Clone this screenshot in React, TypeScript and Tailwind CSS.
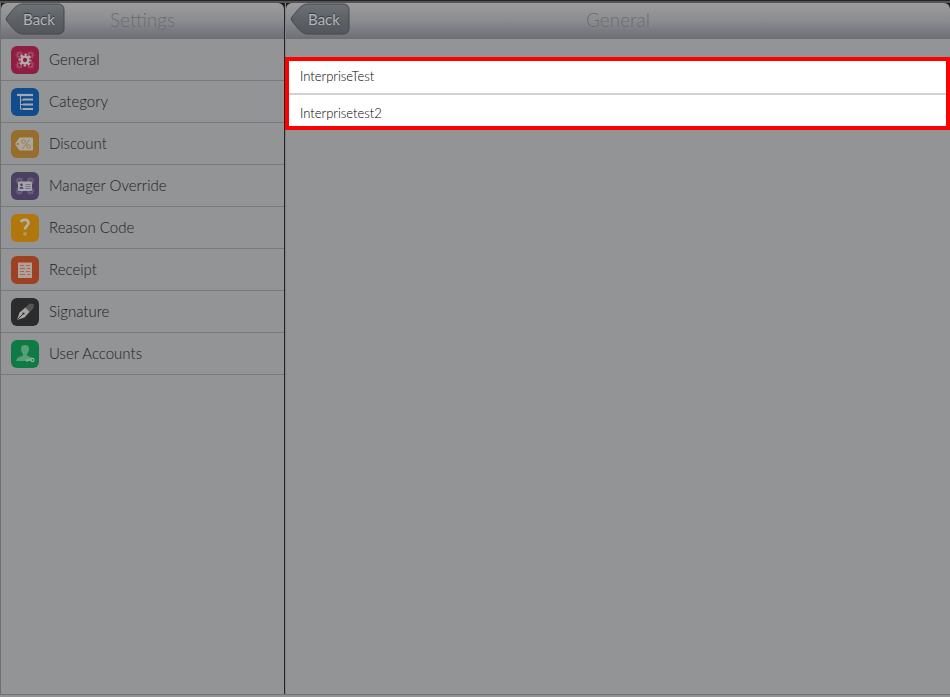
import { ReactNode } from "react";

interface GearProps {
  cx: number;
  cy: number;
  r: number;
  color: string;
  hole: string;
}

function Gear({ cx, cy, r, color, hole }: GearProps) {
  const tooth = (Math.PI * 2 * r) / 16;
  return (
    <g>
      <circle cx={cx} cy={cy} r={r * 0.85} fill={color} />
      <circle cx={cx} cy={cy} r={r} fill="none" stroke={color} strokeWidth={r * 0.4} strokeDasharray={`${tooth} ${tooth}`} strokeDashoffset={tooth / 2} />
      <circle cx={cx} cy={cy} r={r * 0.4} fill={hole} />
    </g>
  );
}

function SmallGears({ color, hole }: { color: string; hole: string }) {
  return (
    <>
      <Gear cx={8.5} cy={9} r={3.2} color={color} hole={hole} />
      <Gear cx={19.5} cy={9} r={3.2} color={color} hole={hole} />
      <Gear cx={8.5} cy={19} r={3.2} color={color} hole={hole} />
      <Gear cx={19.5} cy={19} r={3.2} color={color} hole={hole} />
    </>
  );
}

interface Item {
  label: string;
  bg: string;
  icon: ReactNode;
}

const items: Item[] = [
  {
    label: "General",
    bg: "bg-[#8e1f43]",
    icon: (
      <>
        <SmallGears color="#a94a68" hole="#8e1f43" />
        <Gear cx={14} cy={14} r={5.4} color="#b3adaf" hole="#8e1f43" />
      </>
    ),
  },
  {
    label: "Category",
    bg: "bg-[#124c8e]",
    icon: (
      <g stroke="#a3a9af" fill="none">
        <path d="M6 7h16" strokeWidth="2.2" />
        <path d="M9.5 8v13.5M9.5 12h3M9.5 16.5h3M9.5 21h3" strokeWidth="1" />
        <path d="M12 11.500h10M12 16.500h10M12 21h10" strokeWidth="2.2" />
      </g>
    ),
  },
  {
    label: "Discount",
    bg: "bg-[#966d2c]",
    icon: (
      <>
        <path d="M4 14l4.5-6.500H21a1 1 0 0 1 1 1v11a1 1 0 0 1-1 1H8.500z" fill="#aaa69e" />
        <circle cx="6.800" cy="14" r="1.100" fill="#966d2c" />
        <g stroke="#9b7c4a" fill="none" strokeWidth="1">
          <circle cx="12.500" cy="11.500" r="1.800" />
          <circle cx="17.500" cy="16.500" r="1.800" />
          <path d="M18.500 9.500l-7 9.500" />
        </g>
      </>
    ),
  },
  {
    label: "Manager Override",
    bg: "bg-[#4b4061]",
    icon: (
      <>
        <SmallGears color="#6c6480" hole="#4b4061" />
        <rect x="7" y="9.500" width="14" height="9.500" rx="1" fill="#a5a4aa" />
        <circle cx="10.500" cy="12.800" r="1.300" fill="#4b4061" />
        <path d="M8.500 16.800c0-2.800 4-2.800 4 0z" fill="#4b4061" />
        <path d="M14.500 12.500h5M14.500 14.500h5M14.500 16.500h5" stroke="#77728a" strokeWidth="1" />
      </>
    ),
  },
  {
    label: "Reason Code",
    bg: "bg-[#b0770c]",
    icon: (
      <>
        <path d="M10 8.200c1-3.200 7.800-3 7.500.8-.2 2.800-3.500 2.800-3.500 6.500" stroke="#b4b0a8" strokeWidth="2.800" fill="none" />
        <circle cx="14" cy="19.800" r="1.900" fill="#b09a68" />
      </>
    ),
  },
  {
    label: "Receipt",
    bg: "bg-[#9c4122]",
    icon: (
      <>
        <rect x="7" y="6.500" width="14" height="15.500" fill="#b0a09a" />
        <path d="M9 9.500h4M15 9.500h4M9 12.500h5M16 12.500h3M9 15.500h4M15 15.500h4M9 18.500h5M16 18.500h3" stroke="#a6684f" strokeWidth="1" />
      </>
    ),
  },
  {
    label: "Signature",
    bg: "bg-[#2b2b2b]",
    icon: (
      <>
        <path d="M14.500 9.500l4-4 4.500.5-.5 4-4 4.500z" fill="#555555" />
        <path d="M6 22l2.500-7.500 6-5 4 4.500-5 5.500z" fill="#a5a5a5" />
        <path d="M6.500 21.500l5.500-5.500" stroke="#2b2b2b" strokeWidth=".9" />
        <circle cx="12.500" cy="15.500" r="1.100" fill="#2b2b2b" />
      </>
    ),
  },
  {
    label: "User Accounts",
    bg: "bg-[#0f7a43]",
    icon: (
      <>
        <path d="M14 5c-3 0-4.300 2-4 4.600.2 2.200 1 3.400 2 4.400v1.500c-2 1.300-6.500 1.500-6.800 5.500h17.300c-.3-4-4.500-4.200-6.500-5.500V14c1-1 1.800-2.200 2-4.400.3-2.600-1-4.600-4-4.600z" fill="#55a077" />
        <path d="M15 20h5M16 20v1.800" stroke="#a0b5a8" strokeWidth="1.200" />
        <circle cx="21.500" cy="20" r="1.600" fill="#0f7a43" stroke="#a0b5a8" strokeWidth="1.100" />
      </>
    ),
  },
];

const accounts = ["InterpriseTest", "Interprisetest2"];

function BackButton() {
  return (
    <button type="button" className="relative h-8 w-15 pl-2 text-[15px] font-normal text-[#b4b7bb] [text-shadow:0_-1px_1px_#303338]">
      <svg className="absolute inset-0 h-full w-full" viewBox="0 0 60 32" aria-hidden="true">
        <defs>
          <linearGradient id="back" x1="0" y1="0" x2="0" y2="1">
            <stop offset="0" stopColor="#6e7175" />
            <stop offset="0.5" stopColor="#5e6267" />
            <stop offset="1" stopColor="#53575d" />
          </linearGradient>
        </defs>
        <path d="M18 1H53Q59 1 59 7V25Q59 31 53 31H18C11 31 7 24 2 18Q0 16 2 14C7 8 11 1 18 1Z" fill="url(#back)" stroke="#44474b" />
      </svg>
      <span className="relative">Back</span>
    </button>
  );
}

function Header({ title }: { title: string }) {
  return (
    <div className="bg-[#1c1c1e]">
      <header className="relative flex h-9 items-center justify-center rounded-t-md bg-linear-to-b from-[#9c9c9d] via-[#8b8c90] to-[#6c6d76]">
        <div className="absolute left-1 top-0 flex">
          <BackButton />
        </div>
        <h1 className="pb-0.5 text-[19px] font-light text-[#6b6c6e]">{title}</h1>
      </header>
    </div>
  );
}

export default function App() {
  return (
    <div className="flex min-h-screen flex-col border-t border-[#232325] bg-[#8f9193] pb-0.5 font-[Lato,sans-serif] font-light">
      <div className="flex grow border-b border-t-2 border-b-[#727375] border-t-[#555557]">
        <aside className="w-[285px] shrink-0 border-l border-r border-l-[#6f7072] border-r-[#242426] bg-[#929496]">
          <Header title="Settings" />
          <ul>
            {items.map(item => (
              <li key={item.label} className="border-b border-[#77797b]">
                <a href="#" className="flex h-[41px] items-center gap-2.5 pl-2.5 text-[15px] text-[#1c1d1f]">
                  <span className={`size-7 rounded-md ${item.bg}`}>
                    <svg viewBox="0 0 28 28" className="size-7" aria-hidden="true">
                      {item.icon}
                    </svg>
                  </span>
                  {item.label}
                </a>
              </li>
            ))}
          </ul>
        </aside>
        <main className="min-w-0 grow border-l border-[#808284] bg-[#929496]">
          <Header title="General" />
          <div className="relative mt-[18px] -ml-px bg-white pt-px">
            <ul>
              {accounts.map(name => (
                <li key={name} className="border-t-2 border-[#d2d2d2] first:border-t-0">
                  <a href="#" className="flex h-[35px] items-center pl-[15px] pt-0.5 text-[13px] text-black">
                    {name}
                  </a>
                </li>
              ))}
            </ul>
            <div className="pointer-events-none absolute inset-0 border-4 border-[#ff0000]" />
          </div>
        </main>
      </div>
    </div>
  );
}
